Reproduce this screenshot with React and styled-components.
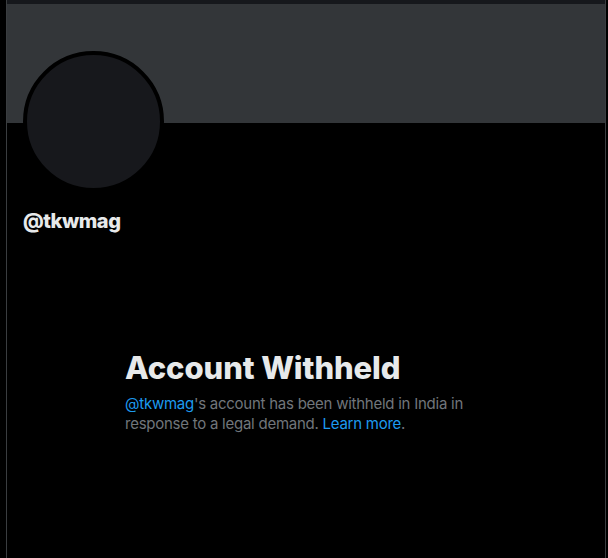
import React from "react"
import styled, { createGlobalStyle } from "styled-components"

const GlobalStyle = createGlobalStyle`
  html, body {
    margin: 0;
    padding: 0;
    background: #000000;
    height: 100%;
  }
  body {
    font-family: Inter, "Noto Sans", "Liberation Sans", sans-serif;
    -webkit-font-smoothing: antialiased;
  }
`

const Page = styled.div`
  display: flex;
  justify-content: flex-start;
  height: 558px;
  overflow: hidden;
  padding-left: 6px;
`

const Column = styled.main`
  width: 598px;
  border-left: 1px solid #3a3d40;
  border-right: 1px solid #3a3d40;
  display: flex;
  flex-direction: column;
`

const TopStrip = styled.div`
  height: 4px;
  background: #16181c;
`

const Banner = styled.div`
  height: 119px;
  background: #333639;
`

const ProfileHead = styled.div`
  padding: 0 16px;
`

const Avatar = styled.div`
  width: 133px;
  height: 133px;
  margin-top: -72px;
  border: 4px solid #000000;
  border-radius: 50%;
  background: #17181c;
`

const Handle = styled.div`
  margin-top: 17px;
  font-size: 20px;
  line-height: 24px;
  font-weight: 800;
  color: #e7e9ea;
  letter-spacing: -0.45px;
`

const Notice = styled.section`
  display: flex;
  justify-content: center;
  margin-top: 117px;
`

const NoticeBody = styled.div`
  width: 362px;
`

const Title = styled.h2`
  margin: 0;
  font-size: 31px;
  line-height: 36px;
  font-weight: 800;
  color: #e7e9ea;
  letter-spacing: -0.1px;
`

const Desc = styled.p`
  margin: 8px 0 0;
  font-size: 15px;
  line-height: 20px;
  color: #71767b;
  letter-spacing: -0.25px;
`

const Link = styled.a`
  color: #1d9bf0;
  text-decoration: none;
`

export default function App() {
  return (
    <>
      <GlobalStyle />
      <Page>
        <Column>
          <TopStrip />
          <Banner />
          <ProfileHead>
            <Avatar />
            <Handle>@tkwmag</Handle>
          </ProfileHead>
          <Notice>
            <NoticeBody>
              <Title>Account Withheld</Title>
              <Desc>
                <Link>@tkwmag</Link>'s account has been withheld in India in
                response to a legal demand. <Link>Learn more</Link>.
              </Desc>
            </NoticeBody>
          </Notice>
        </Column>
      </Page>
    </>
  )
}
